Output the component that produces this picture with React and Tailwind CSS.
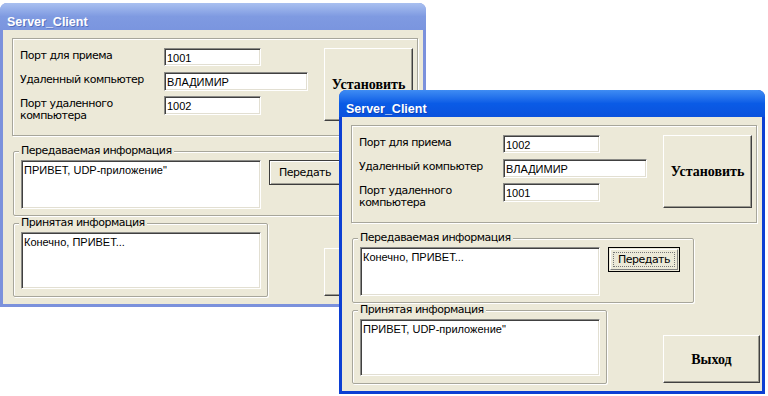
const ui = "font-['DejaVu_Sans',Tahoma,sans-serif] text-[11px] leading-[12px] tracking-[-0.5px] text-black";
const mono = "font-['Liberation_Sans',Arial,sans-serif] text-[11px] text-black";
const serifBold = "font-['Liberation_Serif','Times_New_Roman',serif] font-bold text-[14px] text-black";

function Field({ value, className }) {
  return (
    <div
      className={`${className} bg-white border-t border-l border-t-[#8a8a86] border-l-[#8a8a86] border-b border-r border-b-white border-r-white shadow-[inset_1px_1px_0_#404040,inset_-1px_-1px_0_#e2dfd2] pl-[2px] pt-[2px] ${mono} leading-[14px] overflow-hidden whitespace-nowrap`}
    >
      {value}
    </div>
  );
}

function BigButton({ label, className }) {
  return (
    <div
      className={`${className} bg-[#ece9d8] border-t border-l border-t-white border-l-white border-b border-r border-b-[#404040] border-r-[#404040] shadow-[inset_-1px_-1px_0_#9a998f] flex items-center justify-center ${serifBold}`}
    >
      {label}
    </div>
  );
}

function SendButton({ focused }) {
  if (focused) {
    return (
      <div className="w-[72px] h-[25px] border border-black bg-[#ece9d8] p-[1px]">
        <div className="w-full h-full border-t border-l border-t-white border-l-white border-b border-r border-b-[#808080] border-r-[#808080] p-[2px]">
          <div className={`w-full h-full border border-dotted border-[#777] flex items-center justify-center ${ui}`}>
            Передать
          </div>
        </div>
      </div>
    );
  }
  return (
    <div className={`w-[72px] h-[25px] border border-[#3c3c3c] bg-[#ece9d8] shadow-[inset_1px_1px_0_#fff,inset_-1px_-1px_0_#a09f95] flex items-center justify-center ${ui}`}>
      Передать
    </div>
  );
}

function Group({ title, className, children }) {
  return (
    <fieldset
      className={`${className} border border-[#a7a69b] shadow-[inset_1px_1px_0_#fff,1px_1px_0_#fff] rounded-[2px]`}
    >
      <legend className={`ml-[5px] px-[2px] bg-[#ece9d8] ${ui}`}>{title}</legend>
      {children}
    </fieldset>
  );
}

function Window({ active, localPort, remotePort, sent, received, className }) {
  const frame = active ? 'bg-[#0c3fd3]' : 'bg-[#7b91dc]';
  const title = active
    ? 'bg-gradient-to-b from-[#3f8cf3] via-[#0a5be6] to-[#0a52dd]'
    : 'bg-gradient-to-b from-[#a9c0f0] via-[#7f9ae1] to-[#7a95df]';
  return (
    <div className={`${className} w-[426px] h-[304px] flex flex-col rounded-t-[7px] overflow-hidden ${frame}`}>
      <div className={`h-[27px] ${title} pl-[7px] pt-[5px]`}>
        <span className="font-['Liberation_Sans',Arial,sans-serif] font-bold text-[12.5px] leading-[14px] text-white [text-shadow:1px_1px_0_rgba(10,30,120,0.35)]">
          Server_Client
        </span>
      </div>
      <div className="flex-1 px-[3px] pb-[3px] flex">
        <div className="flex-1 bg-[#ece9d8] pt-[8px] pl-[9px] flex flex-col">
          <div className="w-[406px] h-[98px] border border-[#a7a69b] shadow-[inset_1px_1px_0_#fff,1px_1px_0_#fff] pl-[7px] pt-[9px] flex">
            <div className="w-[304px] flex flex-col">
              <div className="flex items-start">
                <div className={`w-[144px] pt-[2px] ${ui}`}>Порт для приема</div>
                <Field value={localPort} className="w-[97px] h-[18px]" />
              </div>
              <div className="flex items-start mt-[6px]">
                <div className={`w-[144px] pt-[2px] ${ui}`}>Удаленный компьютер</div>
                <Field value="ВЛАДИМИР" className="w-[144px] h-[19px]" />
              </div>
              <div className="flex items-start mt-[5px]">
                <div className={`w-[144px] pt-[2px] ${ui}`}>
                  Порт удаленного
                  <br />
                  компьютера
                </div>
                <Field value={remotePort} className="w-[97px] h-[19px]" />
              </div>
            </div>
            <BigButton label="Установить" className="w-[89px] h-[73px]" />
          </div>

          <Group title="Передаваемая информация" className="mt-[9px] ml-[1px] w-[342px] h-[71px]">
            <div className="flex gap-[8px] pl-[7px] pt-[3px]">
              <Field value={sent} className="w-[240px] h-[49px]" />
              <SendButton focused={active} />
            </div>
          </Group>

          <div className="flex items-end mt-[1px]">
            <Group title="Принятая информация" className="ml-[1px] w-[255px] h-[80px]">
              <div className="pl-[7px] pt-[3px]">
                <Field value={received} className="w-[240px] h-[57px]" />
              </div>
            </Group>
            <BigButton label="Выход" className="ml-[56px] mb-[1px] w-[97px] h-[48px]" />
          </div>
        </div>
      </div>
    </div>
  );
}

export default function App() {
  return (
    <div className="relative w-[768px] h-[396px] bg-white overflow-hidden">
      <Window
        className="absolute left-0 top-[3px]"
        localPort="1001"
        remotePort="1002"
        sent={'ПРИВЕТ, UDP-приложение"'}
        received="Конечно, ПРИВЕТ..."
      />
      <Window
        active
        className="absolute left-[339px] top-[90px]"
        localPort="1002"
        remotePort="1001"
        sent="Конечно, ПРИВЕТ..."
        received={'ПРИВЕТ, UDP-приложение"'}
      />
    </div>
  );
}
